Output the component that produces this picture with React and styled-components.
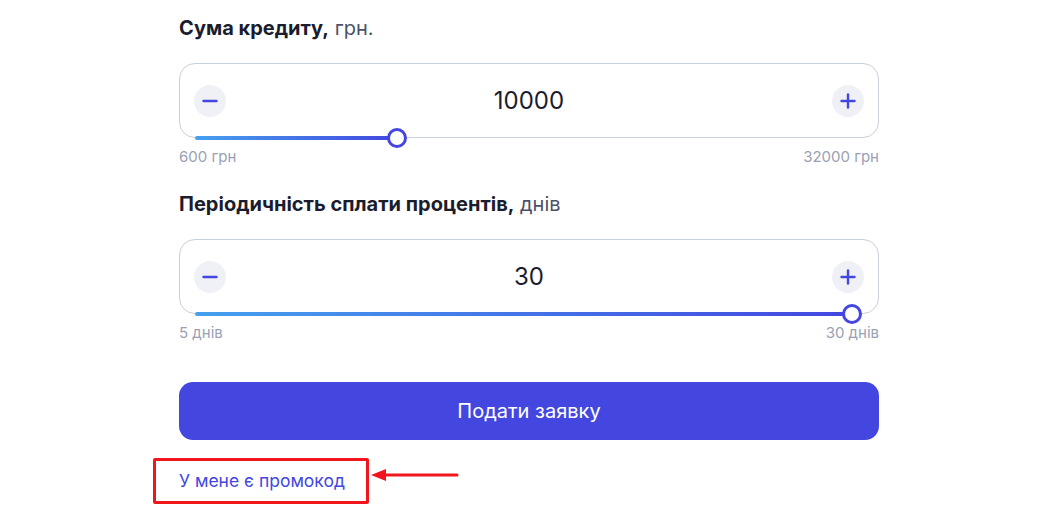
import React from 'react';
import styled, { createGlobalStyle } from 'styled-components';

const GlobalStyle = createGlobalStyle`
  body {
    margin: 0;
    background: #ffffff;
    font-family: Inter, "Noto Sans", sans-serif;
  }
`;

const Page = styled.div`
  padding: 18px 0 40px 179px;
`;

const Form = styled.div`
  width: 700px;
  display: flex;
  flex-direction: column;
`;

const Section = styled.div`
  display: flex;
  flex-direction: column;
  margin-bottom: ${p => p.last ? '41px' : '29px'};
`;

const Heading = styled.div`
  font-size: 20px;
  line-height: 20px;
  color: #1a1d2e;
  margin-bottom: 25px;
  b {
    font-weight: 700;
  }
  span {
    color: #4b5168;
    font-weight: 400;
  }
`;

const Box = styled.div`
  position: relative;
  height: 73px;
  border: 1px solid #c9cfdc;
  border-radius: 16px;
  display: flex;
  align-items: center;
  justify-content: space-between;
  padding: 0 14px;
`;

const StepButton = styled.button`
  width: 32px;
  height: 32px;
  border-radius: 50%;
  border: none;
  background: #f0f1f6;
  display: flex;
  align-items: center;
  justify-content: center;
  padding: 0;
  cursor: pointer;
`;

const Value = styled.div`
  font-size: 24px;
  color: #1a1d2e;
`;

const Track = styled.div`
  position: absolute;
  left: 15px;
  right: 16px;
  bottom: -3px;
  height: 4px;
`;

const Fill = styled.div`
  position: absolute;
  left: 0;
  top: 0;
  height: 4px;
  border-radius: 2px;
  background: linear-gradient(90deg, #45a0ee 0%, #4347e0 100%);
`;

const Thumb = styled.div`
  position: absolute;
  top: -8px;
  width: 14px;
  height: 14px;
  margin-left: -10px;
  border-radius: 50%;
  background: #ffffff;
  border: 3px solid #4347e0;
`;

const Limits = styled.div`
  display: flex;
  justify-content: space-between;
  margin-top: 11px;
  font-size: 15px;
  line-height: 16px;
  color: #9aa1b5;
`;

const Submit = styled.button`
  height: 58px;
  border: none;
  border-radius: 14px;
  background: #4347e0;
  color: #ffffff;
  font-family: Inter, "Noto Sans", sans-serif;
  font-size: 20px;
  cursor: pointer;
`;

const PromoRow = styled.div`
  position: relative;
  margin-top: 31px;
  height: 20px;
`;

const PromoLink = styled.a`
  font-size: 17.5px;
  line-height: 20px;
  color: #4347e0;
  text-decoration: none;
`;

const Highlight = styled.div`
  position: absolute;
  left: -26px;
  top: -13px;
  width: 210px;
  height: 40px;
  border: 3px solid #f0161b;
  border-radius: 2px;
`;

const Arrow = styled.svg`
  position: absolute;
  left: 191px;
  top: -3px;
`;

const Minus = () => (
  <svg width="16" height="16" viewBox="0 0 16 16">
    <line x1="1.5" y1="8" x2="14.5" y2="8" stroke="#4347e0" strokeWidth="2.4" strokeLinecap="round" />
  </svg>
);

const Plus = () => (
  <svg width="16" height="16" viewBox="0 0 16 16">
    <line x1="1.5" y1="8" x2="14.5" y2="8" stroke="#4347e0" strokeWidth="2.4" strokeLinecap="round" />
    <line x1="8" y1="1.5" x2="8" y2="14.5" stroke="#4347e0" strokeWidth="2.4" strokeLinecap="round" />
  </svg>
);

const sliders = [
  { title: 'Сума кредиту,', unit: 'грн.', value: 10000, min: 600, max: 32000, minLabel: '600 грн', maxLabel: '32000 грн' },
  { title: 'Періодичність сплати процентів,', unit: 'днів', value: 30, min: 5, max: 30, minLabel: '5 днів', maxLabel: '30 днів' },
];

// thumb centre travels 8px in from the left end, 10px from the right end
const thumbPos = (s) => {
  const f = (s.value - s.min) / (s.max - s.min);
  return `calc(8px + (100% - 18px) * ${f})`;
};

const SliderField = ({ s, last }) => (
  <Section last={last}>
    <Heading><b>{s.title}</b> <span>{s.unit}</span></Heading>
    <Box>
      <StepButton><Minus /></StepButton>
      <Value>{s.value}</Value>
      <StepButton><Plus /></StepButton>
      <Track>
        <Fill style={{ width: thumbPos(s) }} />
        <Thumb style={{ left: thumbPos(s) }} />
      </Track>
    </Box>
    <Limits>
      <span>{s.minLabel}</span>
      <span>{s.maxLabel}</span>
    </Limits>
  </Section>
);

export default function App() {
  return (
    <Page>
      <GlobalStyle />
      <Form>
        {sliders.map((s, i) => (
          <SliderField key={i} s={s} last={i === sliders.length - 1} />
        ))}
        <Submit>Подати заявку</Submit>
        <PromoRow>
          <PromoLink href="#">У мене є промокод</PromoLink>
          <Highlight />
          <Arrow width="90" height="14" viewBox="0 0 90 14">
            <line x1="12" y1="7" x2="87" y2="7" stroke="#f0161b" strokeWidth="3" strokeLinecap="round" />
            <polygon points="1,7 16,1 16,13" fill="#f0161b" />
          </Arrow>
        </PromoRow>
      </Form>
    </Page>
  );
}
